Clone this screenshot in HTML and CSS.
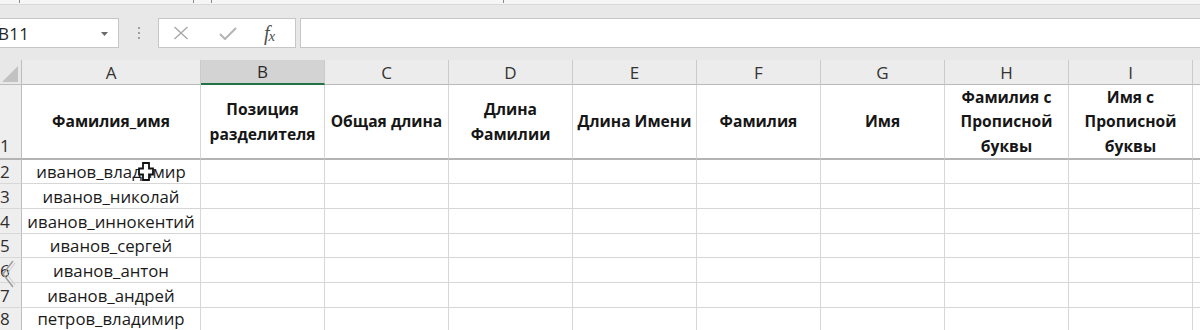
FILE: index.html
```html
<!DOCTYPE html>
<html lang="ru">
<head>
<meta charset="utf-8">
<title>Excel</title>
<link rel="stylesheet" href="styles.css">
</head>
<body>
<div class="page">
  <div class="ribbon-edge">
    <span class="tick t1"></span><span class="tick t2"></span><span class="tick t3"></span><span class="tick t4"></span>
  </div>
  <div class="toolbar">
    <div class="namebox">
      <span class="ref">B11</span>
      <svg class="drop" width="7" height="4" viewBox="0 0 7 4"><polygon points="0,0 7,0 3.5,4" fill="#6a6a6a"/></svg>
    </div>
    <div class="grip"><i></i><i></i><i></i></div>
    <div class="fxbox">
      <svg class="ico" width="16" height="14" viewBox="0 0 16 14"><path d="M1.5 1 L14.5 13 M14.5 1 L1.5 13" stroke="#a8a8a8" stroke-width="1.4" fill="none"/></svg>
      <svg class="ico" width="18" height="13" viewBox="0 0 18 13"><path d="M1 7 L6 12 L17 1" stroke="#b4b4b4" stroke-width="2" fill="none"/></svg>
      <span class="fx">f<sub>x</sub></span>
    </div>
    <div class="formula"></div>
  </div>

  <div class="sheet">
    <div class="corner"><svg width="22" height="24" viewBox="0 0 22 24"><polygon points="18,6 18,22 2,22" fill="#c2c2c2"/></svg></div>
    <div class="ch">A</div>
    <div class="ch sel">B</div>
    <div class="ch">C</div>
    <div class="ch">D</div>
    <div class="ch">E</div>
    <div class="ch">F</div>
    <div class="ch">G</div>
    <div class="ch">H</div>
    <div class="ch">I</div>
    <div class="ch last"></div>

    <div class="rh r1">1</div>
    <div class="c hd">Фамилия_имя</div>
    <div class="c hd">Позиция<br>разделителя</div>
    <div class="c hd">Общая длина</div>
    <div class="c hd">Длина<br>Фамилии</div>
    <div class="c hd">Длина Имени</div>
    <div class="c hd">Фамилия</div>
    <div class="c hd">Имя</div>
    <div class="c hd">Фамилия с<br>Прописной<br>буквы</div>
    <div class="c hd">Имя с<br>Прописной<br>буквы</div>
    <div class="c hd last"></div>

    <div class="rh">2</div><div class="c">иванов_владимир</div><div class="c"></div><div class="c"></div><div class="c"></div><div class="c"></div><div class="c"></div><div class="c"></div><div class="c"></div><div class="c"></div><div class="c last"></div>
    <div class="rh">3</div><div class="c">иванов_николай</div><div class="c"></div><div class="c"></div><div class="c"></div><div class="c"></div><div class="c"></div><div class="c"></div><div class="c"></div><div class="c"></div><div class="c last"></div>
    <div class="rh">4</div><div class="c">иванов_иннокентий</div><div class="c"></div><div class="c"></div><div class="c"></div><div class="c"></div><div class="c"></div><div class="c"></div><div class="c"></div><div class="c"></div><div class="c last"></div>
    <div class="rh">5</div><div class="c">иванов_сергей</div><div class="c"></div><div class="c"></div><div class="c"></div><div class="c"></div><div class="c"></div><div class="c"></div><div class="c"></div><div class="c"></div><div class="c last"></div>
    <div class="rh">6</div><div class="c">иванов_антон</div><div class="c"></div><div class="c"></div><div class="c"></div><div class="c"></div><div class="c"></div><div class="c"></div><div class="c"></div><div class="c"></div><div class="c last"></div>
    <div class="rh">7</div><div class="c">иванов_андрей</div><div class="c"></div><div class="c"></div><div class="c"></div><div class="c"></div><div class="c"></div><div class="c"></div><div class="c"></div><div class="c"></div><div class="c last"></div>
    <div class="rh lr">8</div><div class="c lr">петров_владимир</div><div class="c lr"></div><div class="c lr"></div><div class="c lr"></div><div class="c lr"></div><div class="c lr"></div><div class="c lr"></div><div class="c lr"></div><div class="c lr"></div><div class="c lr last"></div>
  </div>

  <svg class="cursor" width="16" height="19" viewBox="0 0 16 19">
    <path d="M5 1 H11 V6.5 H15 V12.5 H11 V18 H5 V12.5 H1 V6.5 H5 Z" fill="#fff" stroke="#111" stroke-width="1.8" stroke-linejoin="miter"/>
  </svg>
  <svg class="chev" width="16" height="30" viewBox="0 0 16 30">
    <path d="M13 2 L3 15 L13 28" stroke="#9c9c9c" stroke-width="1.5" fill="none"/>
    <path d="M15 4 L7 15 L15 26" stroke="#c8c8c8" stroke-width="1" fill="none"/>
  </svg>
</div>
</body>
</html>
```

FILE: styles.css
```css
* { box-sizing: border-box; }
html, body { margin: 0; padding: 0; }
body {
  width: 1200px;
  height: 330px;
  overflow: hidden;
  background: #e8e8e8;
  font-family: "Open Sans", "Noto Sans", sans-serif;
  color: #222;
}
.page {
  position: relative;
  width: 1200px;
  height: 330px;
  overflow: hidden;
}

/* thin remainder of the ribbon */
.ribbon-edge {
  height: 5px;
  background: #f5f5f5;
  border-bottom: 1px solid #d9d9d9;
  display: flex;
  align-items: flex-start;
}
.tick { display: block; width: 1px; height: 3px; background: #8a8a8a; }
.t1 { margin-left: 19px; }
.t2 { margin-left: 173px; }
.t3 { margin-left: 17px; }
.t4 { margin-left: 291px; }

/* formula bar */
.toolbar {
  display: flex;
  align-items: flex-start;
  height: 55px;
  padding-top: 13px;
}
.namebox {
  width: 120px;
  height: 30px;
  margin-left: -1px;
  background: #fff;
  border: 1px solid #c6c6c6;
  display: flex;
  align-items: center;
  justify-content: space-between;
  padding-right: 10px;
}
.ref {
  font-size: 17px;
  margin-left: -2px;
  color: #262626;
  letter-spacing: 0.3px;
}
.drop { margin-top: 1px; }
.grip {
  width: 39px;
  height: 30px;
  display: flex;
  flex-direction: column;
  align-items: center;
  justify-content: center;
  gap: 3px;
}
.grip i {
  display: block;
  width: 2px;
  height: 2px;
  background: #a0a0a0;
}
.fxbox {
  width: 138px;
  height: 30px;
  background: #fff;
  border: 1px solid #c6c6c6;
  display: flex;
  align-items: center;
  padding-left: 14px;
  gap: 0;
}
.fxbox .ico:first-child { margin-right: 30px; }
.fxbox .ico:nth-child(2) { margin-right: 27px; }
.fx {
  font-family: "Liberation Serif", "DejaVu Serif", serif;
  font-style: italic;
  font-size: 20px;
  color: #505050;
  line-height: 1;
}
.fx sub { font-size: 15px; vertical-align: -1px; margin-left: -1px; }
.formula {
  flex: 1;
  height: 30px;
  margin-left: 4px;
  margin-right: -2px;
  background: #fff;
  border: 1px solid #c6c6c6;
}

/* grid */
.sheet {
  display: grid;
  grid-template-columns: 22px 179px repeat(8, 124px) 1fr;
  grid-template-rows: 25px 75px 24px 25px 25px 24px 25px 25px 22px;
  background: #fff;
}
.corner {
  background: #e8e8e8;
  border-right: 1px solid #bdbdbd;
  border-bottom: 1px solid #bdbdbd;
}
.corner svg { display: block; }
.ch {
  background: #ececec;
  border-right: 1px solid #cacaca;
  border-bottom: 1px solid #bababa;
  display: flex;
  align-items: center;
  justify-content: center;
  font-size: 17px;
  color: #333;
}
.ch.sel {
  background: #d3d3d3;
  border-bottom: 2px solid #217346;
  color: #2a2a2a;
}
.rh {
  background: #eeeeee;
  border-right: 1px solid #bdbdbd;
  border-bottom: 1px solid #d8d8d8;
  font-size: 17px;
  color: #2e2e2e;
  display: flex;
  align-items: flex-end;
  justify-content: flex-start;
  line-height: 22px;
  overflow: hidden;
}
.rh.r1 { border-bottom: 2px solid #b3b3b3; padding-bottom: 1px; }
.c {
  border-right: 1px solid #d6d6d6;
  border-bottom: 1px solid #d6d6d6;
  display: flex;
  align-items: flex-end;
  justify-content: center;
  text-align: center;
  font-size: 16.8px;
  line-height: 22px;
  color: #1a1a1a;
  white-space: nowrap;
}
.c.hd {
  font-weight: 700;
  font-size: 15.6px;
  line-height: 24.5px;
  align-items: center;
  border-bottom: 2px solid #b3b3b3;
  color: #161616;
}
.lr { border-bottom: none; align-items: flex-start; line-height: 21px; }
.last { border-right: none; }

/* overlays */
.cursor { position: absolute; left: 138px; top: 162px; }
.chev { position: absolute; left: 0; top: 259px; }
```
